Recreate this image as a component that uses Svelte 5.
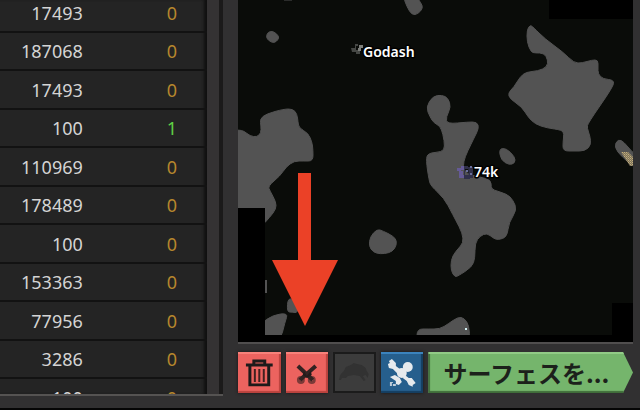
<script lang="ts">
  type Row = { amount: string; count: number };

  const rows: Row[] = [
    { amount: '17493', count: 0 },
    { amount: '187068', count: 0 },
    { amount: '17493', count: 0 },
    { amount: '100', count: 1 },
    { amount: '110969', count: 0 },
    { amount: '178489', count: 0 },
    { amount: '100', count: 0 },
    { amount: '153363', count: 0 },
    { amount: '77956', count: 0 },
    { amount: '3286', count: 0 },
    { amount: '100', count: 0 }
  ];

  // Outlines of the terrain patches, as x y pairs
  const patches = [
    '403 -4 407 7 412 15 418 14 423 8 421 3 416 -4',
    '268 32 273 31 279 36 278 40 274 43 269 41 266 37',
    '230 130 239 130 244 131 250 136 257 137 261 133 261 126 260 119 266 114 284 109 293 109 297 114 298 122 299 128 308 133 312 142 313 150 313 161 304 161 294 161 286 167 280 176 268 186 270 191 276 202 276 209 270 217 260 228 230 228',
    '530 25 527 30 527 42 531 52 535 53 544 53 548 60 547 67 538 71 526 72 520 77 514 87 508 93 510 99 522 107 528 117 535 124 547 128 562 130 564 134 563 142 563 151 574 151 585 151 591 145 590 136 587 128 588 123 613 87 614 80 603 79 598 74 598 67 598 60 592 60 582 63 574 63 563 52 545 39 533 27',
    '442 95 433 96 426 107 430 117 434 123 440 126 443 134 445 147 442 152 428 153 426 160 429 180 431 186 444 198 452 213 466 240 455 252 451 260 451 271 455 277 458 276 472 267 475 258 475 243 480 236 487 233 493 238 498 240 507 237 509 222 517 210 513 200 507 194 493 190 491 187 491 180 480 177 466 174 462 163 474 138 479 128 477 122 468 122 447 124 446 117 451 107 448 98',
    '499 149 506 148 515 157 515 163 509 165 501 160',
    '618 139 624 142 632 152 640 158 640 172 622 157 614 147',
    '377 229 383 231 393 236 397 241 395 249 389 253 380 254 373 252 369 246 370 237',
    '288 297 297 302 298 313 292 312 287 312',
    '260 324 273 315 288 313 285 322 280 342 260 342',
    '417 342 417 329 428 329 440 329 448 324 458 317 464 318 469 325 470 342'
  ];

  // Rounds a polygon: its corners become control points between edge midpoints
  function smooth(list: string) {
    const n = list.split(' ').map(Number);
    const count = n.length / 2;
    let d = '';
    for (let i = 0; i < count; i++) {
      const x = n[i * 2];
      const y = n[i * 2 + 1];
      const next = ((i + 1) % count) * 2;
      const prev = ((i + count - 1) % count) * 2;
      if (i === 0) d = `M${(x + n[prev]) / 2} ${(y + n[prev + 1]) / 2}`;
      d += `Q${x} ${y} ${(x + n[next]) / 2} ${(y + n[next + 1]) / 2}`;
    }
    return d + 'Z';
  }
</script>

<main class="window">
  <section class="list">
    <div class="scroller">
      <table>
        <tbody>
          {#each rows as row}
            <tr>
              <td class="amount">{row.amount}</td>
              <td class="count" class:active={row.count > 0}>{row.count}</td>
            </tr>
          {/each}
        </tbody>
      </table>
    </div>
    <div class="scrollbar"></div>
  </section>

  <section class="surface">
    <svg class="map" viewBox="238 0 395 342" preserveAspectRatio="xMidYMin slice">
      <defs>
        <pattern id="ore" width="2" height="2" patternUnits="userSpaceOnUse">
          <rect width="2" height="2" fill="#7d745d" />
          <rect width="1" height="1" fill="#c3ad7c" />
          <rect x="1" y="1" width="1" height="1" fill="#a5946c" />
        </pattern>
      </defs>
      <rect x="238" width="395" height="342" fill="#0a0c09" />
      {#each patches as patch}
        <path d={smooth(patch)} fill="#535353" stroke="#535353" />
      {/each}
      <path d="M265 280h2v13h-2z" fill="#535353" />
      <path d="M284 0h8v1h-8z" fill="#2b2c2b" />
      <path d="M621 152H628L633 157V166H630Z" fill="url(#ore)" />
      <rect x="465" y="328" width="2" height="2" fill="#d5f4f5" />

      <g fill="#000">
        <rect x="238" y="208" width="27" height="134" />
        <rect x="549" width="84" height="19" />
        <rect x="612" y="303" width="21" height="39" />
        <rect x="238" y="335" width="395" height="7" />
      </g>

      <path d="M351 48h4v-4h3v2h-2v4h4v4h-4v-2h-4z" fill="#454744" />
      <path d="M359 45h4v3h-2v3h-3v-3h1z" fill="#7d7f7b" />
      <path d="M457 168h4v3h-4zM459 171h4v4h-4zM461 166h3v4h-3zM459 175h5v3h-5z" fill="#655a96" />
      <path d="M464 166h4v3h-3v6h5v4h-6zM468 167h5v11h-4z" fill="#30304a" />
      <path d="M466 170h2v2h-2zM470 173h2v2h-2zM470 166h2v2h-2z" fill="#6a6f9c" />
      <text x="363" y="57">Godash</text>
      <text x="474" y="177">74k</text>

      <path d="M298 173h13v87h27L305 326L272 260h26z" fill="#eb4127" />
    </svg>

    <div class="toolbar">
      <button class="tool red" aria-label="Delete">
        <svg viewBox="0 0 43 41">
          <path d="M16 12V9h11v3M8 13h27" fill="none" stroke="#1d1a1a" stroke-width="3" />
          <path d="M12 14v19h19V14" fill="none" stroke="#1d1a1a" stroke-width="3" />
          <path d="M17 17v13M21.500 17v13M26 17v13" stroke="#40201f" stroke-width="2" />
        </svg>
      </button>
      <button class="tool red" aria-label="Cut">
        <svg viewBox="0 0 43 41">
          <g fill="none" stroke="#7c3a38" stroke-width="3">
            <circle cx="15" cy="28" r="2.500" />
            <circle cx="26" cy="28" r="2.500" />
          </g>
          <path d="M12 14L27 28M30 14L14 28" stroke="#332322" stroke-width="4" />
          <path d="M18 19l3 5l4-5l1 4l-5 3l-4-3z" fill="#241c1c" />
        </svg>
      </button>
      <button class="tool off" aria-label="Enemies" disabled>
        <svg viewBox="0 0 43 41">
          <path d="M8 22l3-3l2-4l5-2l3-2l3 1l5 1l4 3l1 3l2 3l-1 4l-2-3l-3 1l3 4l-2 1l-4-5l-6-1l-6 1l-2 2l-4 0l-1 2h-2l1-4z" fill="#323232" />
        </svg>
      </button>
      <button class="tool blue" aria-label="Trim">
        <svg viewBox="0 0 43 41">
          <g fill="#e6eaed">
            <path d="M8 9l3-2l4 4v3l4 3l-3 4l-4-4l-4-1l-1-4l2-1z" />
            <circle cx="27" cy="15" r="5" />
            <circle cx="21" cy="21" r="5" />
            <path d="M24 23l4 3h3l4 5l-3 2v2l-4-2l-2-4l-4-3z" />
            <path d="M9 25l5-2l5 3l2 4l-3 3l-3-1v-3l-3-2z" />
            <path d="M9 30h3v1h-1v3h-2zM12 32h3v2h-3z" opacity=".8" />
          </g>
        </svg>
      </button>
      <button class="go">サーフェスを<span>...</span></button>
    </div>
  </section>
</main>

<style>
  :global(body) {
    margin: 0;
    background: #313031;
  }

  .window {
    display: flex;
    box-sizing: border-box;
    height: 100vh;
    border-bottom: 2px solid #050505;
    overflow: hidden;
    background: #313031;
    font-family: 'Noto Sans', 'Noto Sans CJK JP', sans-serif;
  }

  .list {
    display: flex;
    flex: 223;
    margin-bottom: 12px;
    border-bottom: 2px solid #555352;
    overflow: hidden;
  }

  .scroller {
    flex: 1;
    overflow: hidden;
    background: #242424;
    box-shadow: inset -4px 0 3px -1px #101010;
  }

  table {
    width: 100%;
    margin-top: -8px;
    border-collapse: collapse;
  }

  tr {
    height: 39px;
  }

  tr:nth-child(even) {
    height: 38px;
  }

  td {
    box-sizing: border-box;
    padding: 0;
    border-top: 2px solid #333;
    border-bottom: 2px solid #121212;
    color: #d4d4d4;
    font-size: 18px;
    line-height: 24px;
    text-align: right;
  }

  .amount {
    width: 40%;
  }

  .count {
    padding-right: 30px;
    color: #b6862d;
  }

  .count.active {
    color: #5fd044;
  }

  .scrollbar {
    width: 12px;
    border-right: 4px solid #1b1a1a;
    background: #343233;
  }

  .surface {
    display: flex;
    flex: 395;
    flex-direction: column;
    margin: 0 7px 0 15px;
  }

  .map {
    display: block;
    flex: 1;
    min-height: 0;
    border-bottom: 2px solid #504e4e;
  }

  .map text {
    fill: #fff;
    stroke: #000;
    stroke-width: 3px;
    stroke-linejoin: round;
    paint-order: stroke;
    font-size: 14px;
    font-weight: 600;
  }

  .toolbar {
    display: grid;
    grid-template-columns: repeat(4, 5fr) 24fr;
    gap: 5px;
    margin: 8px 0 15px;
  }

  button {
    height: 41px;
    padding: 0;
    border: 0;
  }

  .tool {
    min-width: 0;
  }

  .tool svg {
    display: block;
    width: 100%;
    height: 100%;
  }

  .red {
    background: #ec635f;
    box-shadow: inset 0 2px #f7817a, inset -2px -2px 1px #b9423e, 0 0 3px #191717;
  }

  .off {
    background: #3c3c3c;
    box-shadow: inset 0 0 0 2px #1b1b1b;
  }

  .blue {
    background: #265f8d;
    box-shadow: inset 0 2px #3b83bd, inset -2px -2px 1px #153e60, 0 0 3px #191717;
  }

  .go {
    padding-left: 15px;
    overflow: hidden;
    background: #75b56c;
    box-shadow: inset 0 2px #91cb86, inset 2px -2px 1px #406d3a;
    clip-path: polygon(0 0, calc(100% - 10px) 0, 100% 50%, calc(100% - 10px) 100%, 0 100%);
    color: #1c211b;
    font-family: 'Noto Sans CJK JP', sans-serif;
    font-size: 24px;
    font-weight: 700;
    line-height: 36px;
    text-align: left;
    white-space: nowrap;
  }
</style>
